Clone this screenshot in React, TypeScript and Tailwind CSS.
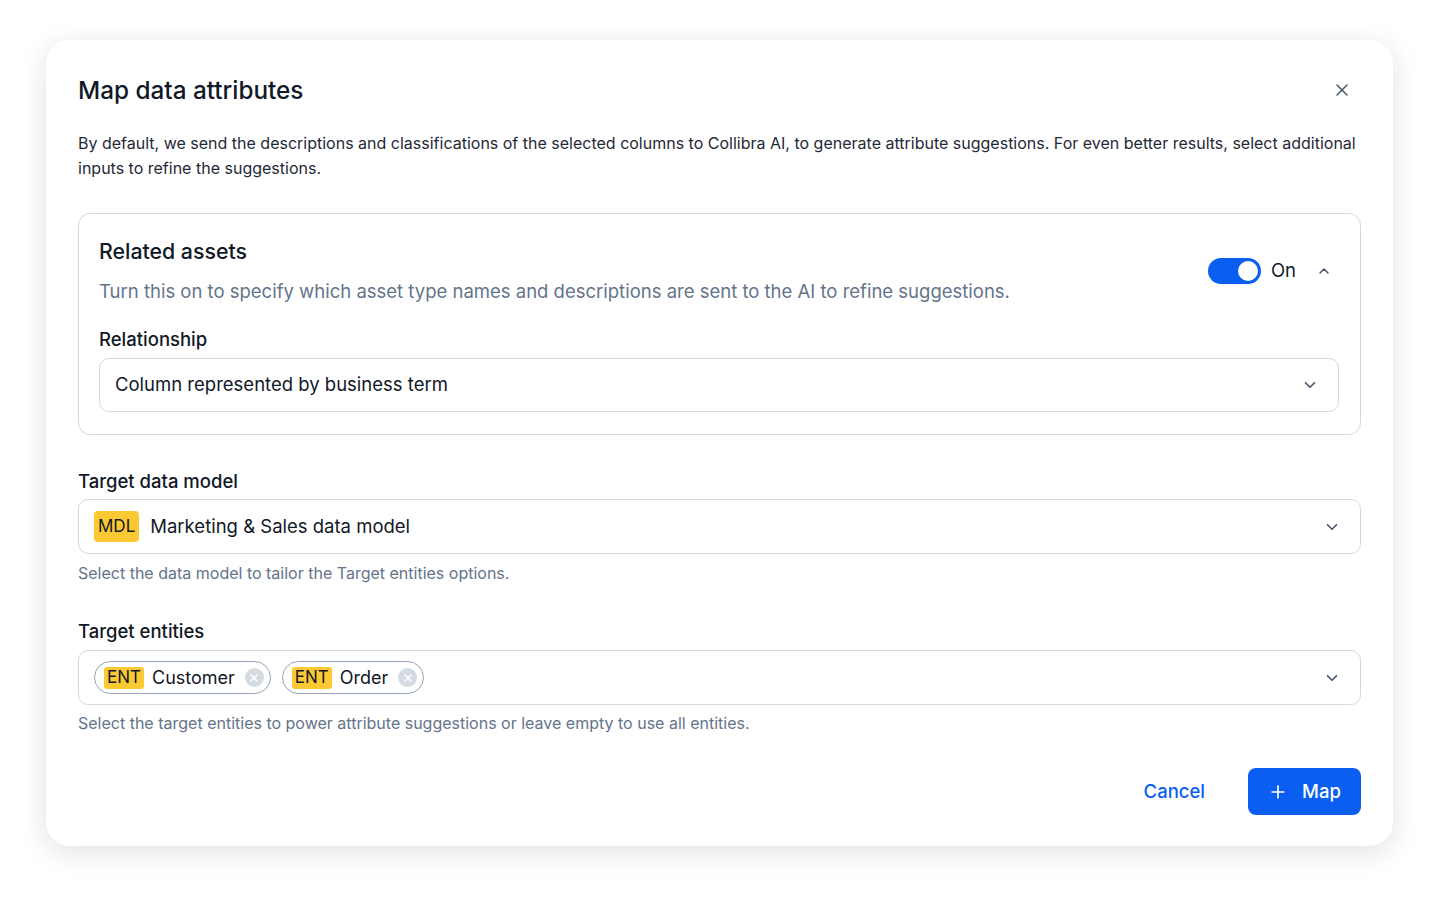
import { ChevronDown, ChevronUp, X, Plus } from "lucide-react"

const font = { fontFamily: "Inter, 'Noto Sans', sans-serif" }

const Chip = ({ name }: { name: string }) => (
    <span className="inline-flex items-center h-[33px] pl-[9px] pr-[6px] gap-[8px] rounded-full border-[1.5px] border-[#94a3b8] bg-white">
        <span className="inline-flex items-center h-[22px] px-[3px] rounded-[3px] bg-[#fcc932] text-[17px] leading-none text-[#111827]">ENT</span>
        <span className="text-[18px] text-[#111827]">{name}</span>
        <span className="ml-[2px] w-[19px] h-[19px] rounded-full bg-[#d5dbe3] flex items-center justify-center">
            <X size={12} strokeWidth={3} className="text-white" />
        </span>
    </span>
)

const App = () => {
    return (
        <div style={font} className="w-[1440px] h-[902px] bg-white pt-[40px] pl-[46px]">
            {/* MODAL */}
            <div className="w-[1347px] h-[806px] bg-white rounded-[24px] shadow-[0_6px_28px_rgba(15,23,42,0.13)] px-[32px] pt-[34px] pb-[31px] flex flex-col">
                <div className="flex items-center justify-between h-[32px]">
                    <h1 className="text-[24.3px] font-medium text-[#111827]">Map data attributes</h1>
                    <X size={20} strokeWidth={1.8} className="text-[#475569] mr-[9px]" />
                </div>
                <p className="mt-[25px] text-[16px] leading-[25px] text-[#1f2937] pr-[4px]">
                    By default, we send the descriptions and classifications of the selected columns to Collibra AI, to generate attribute suggestions. For even better results, select additional inputs to refine the suggestions.
                </p>

                {/* RELATED ASSETS */}
                <div className="mt-[32px] border border-[#d4d9e1] rounded-[12px] pt-[23px] pb-[22px] pl-[20px] pr-[21px]">
                    <div className="flex items-center justify-between">
                        <div>
                            <h2 className="text-[21.3px] leading-[28px] font-medium text-[#111827]">Related assets</h2>
                            <p className="mt-[12px] text-[18.5px] leading-[28px] text-[#64748b]">
                                Turn this on to specify which asset type names and descriptions are sent to the AI to refine suggestions.
                            </p>
                        </div>
                        <div className="flex items-center mr-[7px]">
                            <div className="w-[53px] h-[26px] rounded-full bg-[#0a5ff0] flex items-center justify-end pr-[3px]">
                                <div className="w-[20px] h-[20px] rounded-full bg-white" />
                            </div>
                            <span className="ml-[10px] text-[18.5px] text-[#111827]">On</span>
                            <ChevronUp size={16} strokeWidth={2.2} className="ml-[20px] text-[#475569]" />
                        </div>
                    </div>
                    <div className="mt-[20px] text-[18.5px] leading-[28px] font-medium text-[#111827]">Relationship</div>
                    <div className="mt-[5px] h-[54px] border border-[#d4d9e1] rounded-[10px] flex items-center justify-between pl-[15px] pr-[19px]">
                        <span className="text-[18.5px] text-[#111827]">Column represented by business term</span>
                        <ChevronDown size={18} strokeWidth={2.2} className="text-[#475569]" />
                    </div>
                </div>

                {/* TARGET DATA MODEL */}
                <div className="mt-[32px] text-[18.5px] leading-[28px] font-medium text-[#111827]">Target data model</div>
                <div className="mt-[4px] h-[55px] border border-[#d4d9e1] rounded-[10px] flex items-center justify-between pl-[15px] pr-[19px]">
                    <div className="flex items-center gap-[11px]">
                        <span className="inline-flex items-center h-[31px] px-[4px] rounded-[4px] bg-[#fcc932] text-[17px] leading-none text-[#111827]">MDL</span>
                        <span className="text-[18.5px] text-[#111827]">Marketing &amp; Sales data model</span>
                    </div>
                    <ChevronDown size={18} strokeWidth={2.2} className="text-[#475569]" />
                </div>
                <p className="mt-[7px] text-[16px] leading-[24px] text-[#64748b]">Select the data model to tailor the Target entities options.</p>

                {/* TARGET ENTITIES */}
                <div className="mt-[32px] text-[18.5px] leading-[28px] font-medium text-[#111827]">Target entities</div>
                <div className="mt-[5px] h-[55px] border border-[#d4d9e1] rounded-[10px] flex items-center justify-between pl-[15px] pr-[19px]">
                    <div className="flex items-center gap-[11px]">
                        <Chip name="Customer" />
                        <Chip name="Order" />
                    </div>
                    <ChevronDown size={18} strokeWidth={2.2} className="text-[#475569]" />
                </div>
                <p className="mt-[6px] text-[16px] leading-[24px] text-[#64748b]">Select the target entities to power attribute suggestions or leave empty to use all entities.</p>

                {/* FOOTER */}
                <div className="mt-auto flex items-center justify-end gap-[22px]">
                    <button className="h-[47px] px-[21px] text-[18.5px] font-medium text-[#0a5ff0]">Cancel</button>
                    <button className="h-[47px] w-[113px] rounded-[8px] bg-[#0a5ff0] text-white text-[18.5px] font-medium flex items-center justify-center gap-[14px]">
                        <Plus size={20} strokeWidth={2} />
                        Map
                    </button>
                </div>
            </div>
        </div>
    )
}

export default App
